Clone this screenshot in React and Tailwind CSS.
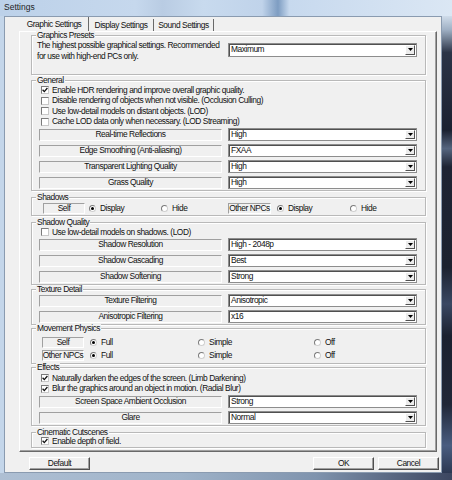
const groupCls =
  "w-[395px] border border-[#b9b9b9] shadow-[inset_1px_1px_0_#ffffff,1px_1px_0_#ffffff]";

function Group({ title, className = "", children }) {
  return (
    <div className={`${groupCls} ${className}`}>
      <div className="-mt-[5px] ml-[4px] w-fit bg-[#f0f0f0] px-[1px] leading-[9px] whitespace-nowrap">
        {title}
      </div>
      {children}
    </div>
  );
}

function Check({ checked, children, className = "" }) {
  return (
    <div className={`flex h-[10.5px] items-center pl-[9px] ${className}`}>
      <span className="flex h-[8px] w-[8px] shrink-0 items-center justify-center border border-t-[#7b7b7b] border-l-[#7b7b7b] border-r-[#c8c8c8] border-b-[#c8c8c8] bg-white">
        {checked && (
          <svg width="6" height="6" viewBox="0 0 6 6">
            <path d="M0.6 2.8 L2.3 4.6 L5.4 1" fill="none" stroke="#111" strokeWidth="1.3" />
          </svg>
        )}
      </span>
      <span className="ml-[3px] whitespace-nowrap">{children}</span>
    </div>
  );
}

function Caption({ children, className = "" }) {
  return (
    <div
      className={`flex shrink-0 items-center justify-center whitespace-nowrap border border-t-[#a0a0a0] border-l-[#a0a0a0] border-r-white border-b-white ${className}`}
    >
      {children}
    </div>
  );
}

function Select({ value, className = "" }) {
  return (
    <div
      className={`flex h-[13px] w-[189px] shrink-0 items-stretch border border-[#8d8d8d] bg-white shadow-[inset_1px_1px_0_#505050] ${className}`}
    >
      <span className="flex-1 pl-[2px] leading-[11px] whitespace-nowrap">{value}</span>
      <span className="my-[1px] mr-[1px] flex w-[10px] items-center justify-center border border-t-white border-l-white border-r-[#505050] border-b-[#505050] bg-[#ececec]">
        <svg width="5" height="4" viewBox="0 0 5 4">
          <path d="M0 0H5L2.5 3Z" fill="#000" />
        </svg>
      </span>
    </div>
  );
}

function OptRow({ label, value, className = "" }) {
  return (
    <div className={`flex h-[13px] items-center pl-[7px] ${className}`}>
      <Caption className="h-[12px] w-[183px]">{label}</Caption>
      <Select value={value} className="ml-[6px]" />
    </div>
  );
}

function Radio({ on, children, className = "" }) {
  return (
    <div className={`flex shrink-0 items-center whitespace-nowrap ${className}`}>
      <span className="flex h-[7px] w-[7px] shrink-0 items-center justify-center rounded-full border border-t-[#7b7b7b] border-l-[#7b7b7b] border-r-[#d0d0d0] border-b-[#d0d0d0] bg-white">
        {on && <span className="h-[3px] w-[3px] rounded-full bg-black" />}
      </span>
      <span className="ml-[4px]">{children}</span>
    </div>
  );
}

function Btn({ children, className = "" }) {
  return (
    <button
      type="button"
      className={`flex h-[13px] w-[61px] items-center justify-center border border-t-white border-l-white border-r-[#505050] border-b-[#505050] bg-[#f0f0f0] leading-[11px] shadow-[inset_-1px_-1px_0_#a0a0a0] ${className}`}
    >
      {children}
    </button>
  );
}

export default function App() {
  return (
    <div className="flex h-[480px] w-[452px] flex-col overflow-hidden font-['Liberation_Sans',Arial,sans-serif] text-[8.4px] tracking-[-0.45px] text-[#111]">
      {/* title bar */}
      <div className="h-[16px] shrink-0 bg-[linear-gradient(90deg,#bcd1e9_0%,#c6d8ed_30%,#b9cce3_36%,#c8daee_45%,#c0d3ea_58%,#7e9dc2_61.5%,#c7d9ee_64%,#dbe7f4_100%)] pl-[4px] text-[8.5px] leading-[14px] tracking-normal text-[#1e1e1e]">
        Settings
      </div>

      <div className="flex h-[457px] shrink-0">
        <div className="w-[4px] bg-[#c4d6ea]" />

        {/* client */}
        <div className="w-[438px] border border-[#8a9bb0] bg-[#f0f0f0]">
          {/* tabs */}
          <div className="flex h-[14px] items-end pl-[15px]">
            <div className="flex h-[14px] w-[69px] items-center justify-center border-r border-[#696969] whitespace-nowrap">
              Graphic Settings
            </div>
            <div className="flex h-[12px] w-[65px] items-center justify-center border-r border-[#696969] whitespace-nowrap">
              Display Settings
            </div>
            <div className="flex h-[12px] w-[60px] items-center justify-center border-r border-[#696969] whitespace-nowrap">
              Sound Settings
            </div>
          </div>

          {/* tab panel */}
          <div className="ml-[14px] h-[421px] w-[418px] border border-t-white border-l-white border-r-[#696969] border-b-[#696969] pl-[11px] shadow-[inset_-1px_-1px_0_#a0a0a0]">
            <Group title="Graphics Presets" className="mt-[3px] h-[40px]">
              <div className="flex items-start">
                <div className="ml-[5px] w-[190px] leading-[10.5px]">
                  The highest possible graphical settings. Recommended for use with high-end PCs only.
                </div>
                <Select value="Maximum" className="mt-[3px] ml-[1px] h-[14px]" />
              </div>
            </Group>

            <Group title="General" className="mt-[5px] h-[111px]">
              <Check checked>Enable HDR rendering and improve overall graphic quality.</Check>
              <Check>Disable rendering of objects when not visible. (Occlusion Culling)</Check>
              <Check>Use low-detail models on distant objects. (LOD)</Check>
              <Check>Cache LOD data only when necessary. (LOD Streaming)</Check>
              <div className="mt-[1px] flex flex-col gap-[3px]">
                <OptRow label="Real-time Reflections" value="High" />
                <OptRow label="Edge Smoothing (Anti-aliasing)" value="FXAA" />
                <OptRow label="Transparent Lighting Quality" value="High" />
                <OptRow label="Grass Quality" value="High" />
              </div>
            </Group>

            <Group title="Shadows" className="mt-[6px] h-[19px]">
              <div className="mt-[1px] flex h-[11px] items-center pl-[11px]">
                <Caption className="h-[11px] w-[42px]">Self</Caption>
                <Radio on className="ml-[4px] w-[72px]">Display</Radio>
                <Radio className="w-[67px]">Hide</Radio>
                <Caption className="h-[11px] w-[43px]">Other NPCs</Caption>
                <Radio on className="ml-[6px] w-[73px]">Display</Radio>
                <Radio>Hide</Radio>
              </div>
            </Group>

            <Group title="Shadow Quality" className="mt-[6px] h-[63px]">
              <Check>Use low-detail models on shadows. (LOD)</Check>
              <div className="mt-[0.5px] flex flex-col gap-[3px]">
                <OptRow label="Shadow Resolution" value="High - 2048p" />
                <OptRow label="Shadow Cascading" value="Best" />
                <OptRow label="Shadow Softening" value="Strong" />
              </div>
            </Group>

            <Group title="Texture Detail" className="mt-[4px] h-[36px]">
              <div className="flex flex-col gap-[3px]">
                <OptRow label="Texture Filtering" value="Anisotropic" />
                <OptRow label="Anisotropic Filtering" value="x16" />
              </div>
            </Group>

            <Group title="Movement Physics" className="mt-[3px] h-[36px]">
              <div className="mt-[4px] flex flex-col gap-[2px]">
                <div className="flex h-[11px] items-center pl-[10px]">
                  <Caption className="h-[11px] w-[42px]">Self</Caption>
                  <Radio on className="ml-[6px] w-[108px]">Full</Radio>
                  <Radio className="w-[116px]">Simple</Radio>
                  <Radio>Off</Radio>
                </div>
                <div className="flex h-[11px] items-center pl-[10px]">
                  <Caption className="h-[11px] w-[42px]">Other NPCs</Caption>
                  <Radio on className="ml-[6px] w-[108px]">Full</Radio>
                  <Radio className="w-[116px]">Simple</Radio>
                  <Radio>Off</Radio>
                </div>
              </div>
            </Group>

            <Group title="Effects" className="mt-[3px] h-[59px]">
              <Check checked className="mt-[1px]">
                Naturally darken the edges of the screen. (Limb Darkening)
              </Check>
              <Check checked>Blur the graphics around an object in motion. (Radial Blur)</Check>
              <div className="mt-[1px] flex flex-col gap-[3px]">
                <OptRow label="Screen Space Ambient Occlusion" value="Strong" />
                <OptRow label="Glare" value="Normal" />
              </div>
            </Group>

            <Group title="Cinematic Cutscenes" className="mt-[6px] h-[16px]">
              <Check checked className="-mt-[1px]">
                Enable depth of field.
              </Check>
            </Group>
          </div>

          {/* buttons */}
          <div className="mt-[5px] flex pl-[24px]">
            <Btn>Default</Btn>
            <Btn className="ml-[223px]">OK</Btn>
            <Btn className="ml-[4px]">Cancel</Btn>
          </div>
        </div>

        <div className="flex-1 bg-[linear-gradient(180deg,#cfdcea_0%,#9fb0c4_3%,#2b3447_8%,#1b2131_25%,#55657f_29%,#1e2434_33%,#1c2230_55%,#3a4863_63%,#1b2130_70%,#202738_85%,#4a5d80_94%,#2c3852_100%)]" />
      </div>

      <div className="flex-1 bg-[linear-gradient(90deg,#aebfd3_0%,#9fb3c9_40%,#7f93ad_70%,#3c4660_100%)]" />
    </div>
  );
}
